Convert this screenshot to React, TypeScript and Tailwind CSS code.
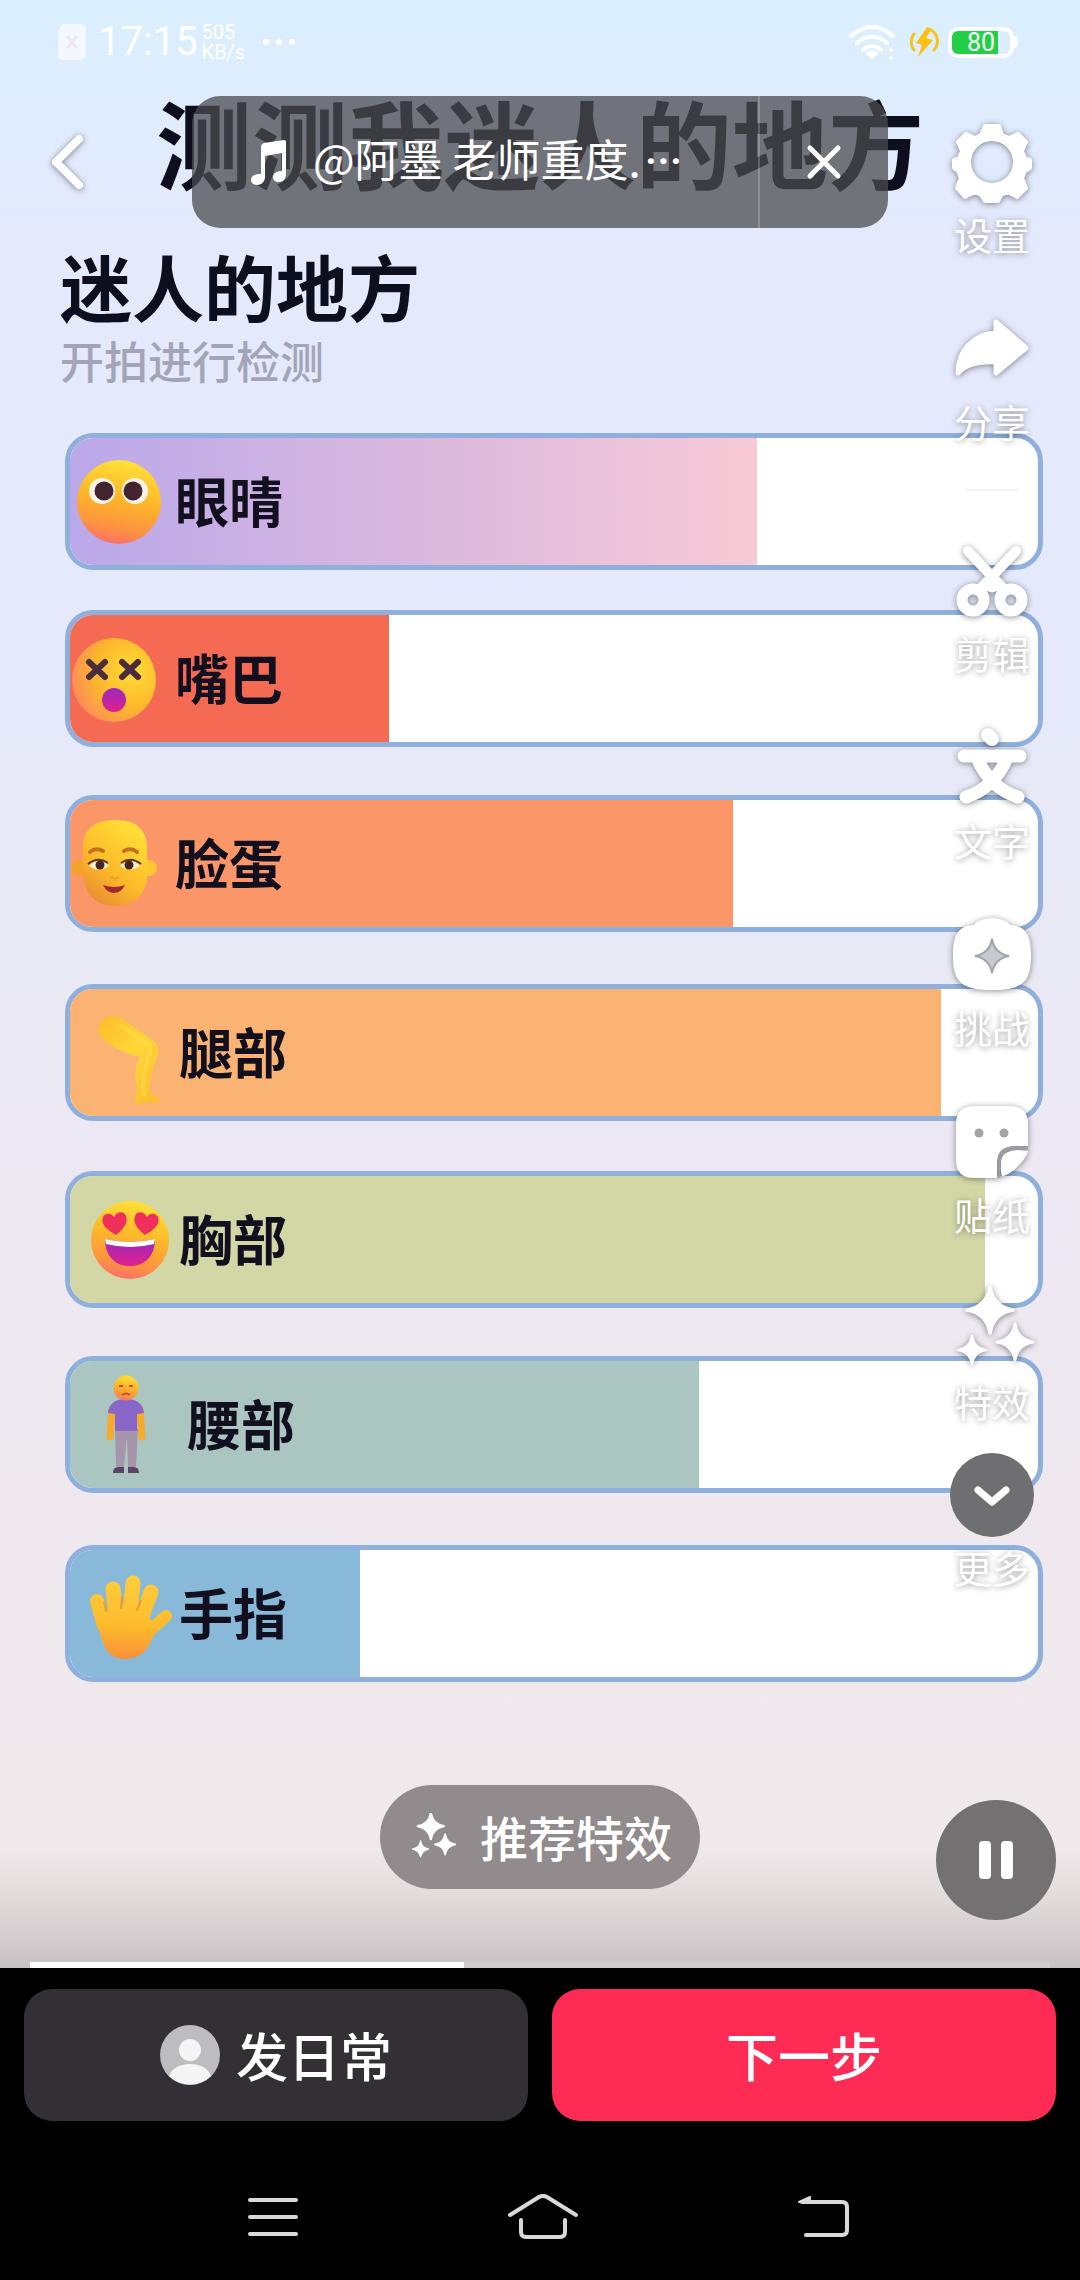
import type { ReactNode } from "react";

const FACE_STOPS = (
  <>
    <stop offset="0" stopColor="#ffe23a" />
    <stop offset="0.45" stopColor="#fdb827" />
    <stop offset="0.8" stopColor="#fd9440" />
    <stop offset="1" stopColor="#fb7168" />
  </>
);

function Defs() {
  return (
    <svg className="absolute size-0" aria-hidden="true">
      <defs>
        <linearGradient id="face" x1="0.65" y1="0" x2="0.45" y2="1">{FACE_STOPS}</linearGradient>
        <radialGradient id="dizzy" cx="0.72" cy="0.4" r="0.75">
          <stop offset="0" stopColor="#ffdc36" />
          <stop offset="0.6" stopColor="#fdb62c" />
          <stop offset="1" stopColor="#fb8a5c" />
        </radialGradient>
        <linearGradient id="mouth" x1="0" y1="0" x2="0" y2="1">
          <stop offset="0" stopColor="#9a2bc0" />
          <stop offset="1" stopColor="#e0208a" />
        </linearGradient>
        <linearGradient id="skin" x1="0.8" y1="0" x2="0.2" y2="1">
          <stop offset="0" stopColor="#ffe338" />
          <stop offset="0.6" stopColor="#fdb928" />
          <stop offset="1" stopColor="#e88a34" />
        </linearGradient>
        <linearGradient id="leg" x1="0" y1="0" x2="0.8" y2="1">
          <stop offset="0" stopColor="#fdbb28" />
          <stop offset="0.5" stopColor="#ffd638" />
          <stop offset="1" stopColor="#fcc030" />
        </linearGradient>
        <linearGradient id="hand" gradientUnits="userSpaceOnUse" x1="60" y1="10" x2="56" y2="96">
          <stop offset="0" stopColor="#ffcf3e" />
          <stop offset="0.6" stopColor="#fdbb2c" />
          <stop offset="1" stopColor="#f98f3a" />
        </linearGradient>
      </defs>
    </svg>
  );
}

function Emoji({ children }: { children: ReactNode }) {
  return (
    <svg viewBox="0 0 105 100" className="h-[100px] w-[105px] shrink-0 overflow-visible" aria-hidden="true">
      {children}
    </svg>
  );
}

const eyesEmoji = (
  <Emoji>
    <circle cx="49" cy="50" r="42" fill="url(#face)" />
    <circle cx="32" cy="39" r="13" fill="#fff3ea" />
    <circle cx="65" cy="39" r="13" fill="#fff3ea" />
    <circle cx="34" cy="39" r="9.5" fill="#422530" />
    <circle cx="63" cy="39" r="9.5" fill="#422530" />
  </Emoji>
);

const mouthEmoji = (
  <Emoji>
    <circle cx="44" cy="51" r="42" fill="url(#dizzy)" />
    <path d="M19 33l16 15M35 33L19 48M52 33l16 15M68 33L52 48" stroke="#4b2c3c" strokeWidth="6" strokeLinecap="round" />
    <circle cx="44" cy="71" r="12" fill="url(#mouth)" />
  </Emoji>
);

const faceEmoji = (
  <Emoji>
    <circle cx="10" cy="54" r="8" fill="#f3a428" />
    <circle cx="79" cy="54" r="8" fill="#fdc52f" />
    <path d="M13 34C13 14 26 6 45 6s32 8 32 28c0 12 1 22 0 32-3 17-16 26-32 26S17 83 14 66c-2-10-1-20-1-32z" fill="url(#skin)" />
    <path d="M20 38q6-5 13-1M54 37q7-4 13 1" stroke="#c5701f" strokeWidth="4" fill="none" strokeLinecap="round" />
    <path d="M19 52q10-10 20 0-10 7-20 0zM50 52q10-10 20 0-10 7-20 0z" fill="#fff1dc" />
    <circle cx="30" cy="51" r="4.5" fill="#4a2418" />
    <circle cx="59" cy="51" r="4.5" fill="#4a2418" />
    <path d="M18 50q10-8 20-1M51 49q10-7 20 1" stroke="#4f3a20" strokeWidth="2" fill="none" />
    <path d="M41 63q4 3 8 0" stroke="#ee9b26" strokeWidth="2" fill="none" />
    <path d="M33 71q11 4 22 0-4 8-11 8t-11-8z" fill="#a02a2c" />
  </Emoji>
);

const legEmoji = (
  <Emoji>
    <path
      d="M29 24C30 14 42 11 52 16L81 36C89 42 90 48 87 54C83 66 79 78 80 89L89 96C91 99 87 101 81 99L66 101C63 96 68 92 67 84C64 74 65 64 70 54C58 51 40 44 32 35C28 31 28 28 29 24Z"
      fill="url(#leg)"
    />
    <path d="M50 22L79 42C82 46 80 50 78 55C74 68 72 80 74 92" stroke="#ffe04a" strokeWidth="4" fill="none" strokeLinecap="round" opacity="0.5" />
  </Emoji>
);

const HEART = "M0 11C-9 5-13 0-12-6C-11-12-3-13 0-7C3-13 11-12 12-6C13 0 9 5 0 11Z";

const heartEmoji = (
  <Emoji>
    <circle cx="60" cy="50" r="39" fill="url(#face)" />
    <path d={HEART} transform="translate(45 34) rotate(-6)" fill="#f0305c" />
    <path d={HEART} transform="translate(76 34) rotate(6)" fill="#f0305c" />
    <path d="M35 49Q60 55 85 49C85 66 75 76 60 76S35 66 35 49Z" fill="url(#mouth)" />
    <path d="M35 49Q60 55 85 49L84 54Q60 60 36 54Z" fill="#fff" />
  </Emoji>
);

const personEmoji = (
  <Emoji>
    <path d="M42 34L40 62M70 34L72 62" stroke="#f6ab2b" strokeWidth="7" strokeLinecap="round" />
    <path d="M45 54h23l-2 38h-8l-1-30-3 30h-8z" fill="#a596ab" />
    <path d="M38 38C39 28 46 24 56 24S73 28 74 38L67 39V56H45V39Z" fill="#8a66c9" />
    <circle cx="56" cy="13" r="12.5" fill="url(#face)" />
    <path d="M49 11h4M59 11h4M52 20q4-3 8 0" stroke="#b5562a" strokeWidth="2" fill="none" />
    <path d="M43 98q0-7 7-6h4v6zM69 98q0-7-7-6h-4v6z" fill="#594466" />
  </Emoji>
);

const handEmoji = (
  <Emoji>
    <g stroke="url(#hand)" strokeLinecap="round" fill="none">
      <path d="M27 37L34 62" strokeWidth="14" />
      <path d="M43 25L47 58" strokeWidth="15" />
      <path d="M63 19L59 58" strokeWidth="15" />
      <path d="M81 28L70 58" strokeWidth="15" />
      <path d="M96 52L74 72" strokeWidth="12" />
    </g>
    <path d="M27 50C40 44 62 44 76 50L86 62C82 76 78 94 56 95C36 96 30 78 27 50Z" fill="url(#hand)" />
    <path d="M36 47l-2-9M51 44l1-11M67 46l4-9" stroke="#f39a25" strokeWidth="2" strokeLinecap="round" />
  </Emoji>
);

type Row = { label: string; icon: ReactNode; fill: string; percent: number; gap: string; inset: string };

const ROWS: Row[] = [
  { label: "眼晴", icon: eyesEmoji, fill: "bg-linear-to-r from-[#bba8ea] via-[#d9b8de] to-[#f8cad6]", percent: 71, gap: "", inset: "" },
  { label: "嘴巴", icon: mouthEmoji, fill: "bg-[#f46a53]", percent: 33, gap: "mt-10", inset: "" },
  { label: "脸蛋", icon: faceEmoji, fill: "bg-[#fb9668]", percent: 68.5, gap: "mt-12", inset: "" },
  { label: "腿部", icon: legEmoji, fill: "bg-[#fbb374]", percent: 90, gap: "mt-[52px]", inset: "ml-1" },
  { label: "胸部", icon: heartEmoji, fill: "bg-[#d3d7a6]", percent: 94.5, gap: "mt-[50px]", inset: "ml-1" },
  { label: "腰部", icon: personEmoji, fill: "bg-[#abc6c1]", percent: 65, gap: "mt-12", inset: "ml-3" },
  { label: "手指", icon: handEmoji, fill: "bg-[#88b9d8]", percent: 30, gap: "mt-[52px]", inset: "ml-1" },
];

function ResultBar({ row }: { row: Row }) {
  return (
    <li className={`relative flex h-[137px] items-center overflow-hidden rounded-[28px] border-[5px] border-[#8fb0dc] bg-white ${row.gap}`}>
      <div className={`absolute inset-y-0 left-0 ${row.fill}`} style={{ width: `${row.percent}%` }} />
      <div className="relative flex items-center">
        {row.icon}
        <span className={`pb-1 text-[54px] leading-[60px] font-bold text-[#12101f] ${row.inset}`}>{row.label}</span>
      </div>
    </li>
  );
}

const STAR = "M0-1C.1-.42.42-.1 1 0C.42.1.1.42 0 1C-.1.42-.42.1-1 0C-.42-.1-.1-.42 0-1Z";

function Sparkles({ className }: { className: string }) {
  return (
    <svg viewBox="0 0 84 84" className={className} fill="currentColor" stroke="currentColor" strokeWidth="0.16" strokeLinejoin="round" aria-hidden="true">
      <path d={STAR} transform="translate(40 23) scale(23)" />
      <path d={STAR} transform="translate(22 63) scale(14)" />
      <path d={STAR} transform="translate(65 55) scale(18)" />
    </svg>
  );
}

const ICON = "size-[84px] overflow-visible drop-shadow-[0_1px_3px_rgba(0,0,0,0.45)]";

const gearIcon = (
  <svg viewBox="0 0 84 84" className={ICON} aria-hidden="true">
    <path
      fill="#fff"
      fillRule="evenodd"
      stroke="#fff"
      strokeWidth="4"
      strokeLinejoin="round"
      d="M35 6h14l3 9 7 3 9-4 8 8-4 9 3 7 5 2v8l-5 3-3 7 4 10-9 9-9-5-7 3-3 6H35l-4-6-6-3-10 5-8-9 4-10-3-7-4-3v-8l5-2 3-7-4-9 8-8 9 4 6-3zM42 19a23 23 0 1 0 0 46 23 23 0 1 0 0-46z"
    />
  </svg>
);

const shareIcon = (
  <svg viewBox="0 0 84 84" className={ICON} fill="#fff" stroke="#fff" strokeWidth="5" strokeLinejoin="round" aria-hidden="true">
    <path d="M46 15L76 41L46 66V55C28 54 16 57 8 66C8 45 22 27 46 26Z" />
  </svg>
);

const scissorsIcon = (
  <svg viewBox="0 0 84 84" className={ICON} fill="none" stroke="#fff" aria-hidden="true">
    <path d="M18 12L52 48M66 12L32 48" strokeWidth="10" strokeLinecap="round" />
    <path d="M42 34L56 49L42 53L28 49Z" fill="#fff" />
    <circle cx="23" cy="61" r="11" strokeWidth="11" />
    <circle cx="61" cy="61" r="11" strokeWidth="11" />
  </svg>
);

const textIcon = (
  <svg viewBox="0 0 84 84" className={ICON} fill="none" stroke="#fff" strokeWidth="13" strokeLinecap="round" strokeLinejoin="round" aria-hidden="true">
    <path d="M38 9L42 13" strokeWidth="14" />
    <path d="M14 30H70M27 32Q40 62 68 71M57 32Q44 62 16 71" />
  </svg>
);

const challengeIcon = (
  <svg viewBox="0 0 84 84" className={ICON} aria-hidden="true">
    <path d="M24 12C29 3 55 3 60 12C76 13 81 22 81 42C81 68 74 77 42 77S3 68 3 42C3 22 8 13 24 12Z" fill="#fff" />
    <path d={STAR} transform="translate(42 43) scale(17)" fill="#c9cad2" stroke="#a5a6ad" strokeWidth="0.12" />
  </svg>
);

const stickerIcon = (
  <svg viewBox="0 0 84 84" className={ICON} aria-hidden="true">
    <path d="M24 6H60C72 6 78 12 78 24V46H66C52 46 47 52 47 64V78H24C12 78 6 72 6 60V24C6 12 12 6 24 6Z" fill="#fff" />
    <path d="M78 51C76 60 62 74 53 76C51 76 51 74 51 64C51 54 56 51 68 50Z" fill="#fff" />
    <path d="M78 48H67C53 48 49 53 49 65V78" fill="none" stroke="#9d9da3" strokeWidth="3" />
    <circle cx="29" cy="33" r="4.500" fill="#a3a3a8" />
    <circle cx="54" cy="33" r="4.500" fill="#a3a3a8" />
  </svg>
);

const moreIcon = (
  <span className="flex size-[84px] items-center justify-center rounded-full bg-[#6f6f72]">
    <svg viewBox="0 0 40 40" className="size-10" fill="none" stroke="#fff" strokeWidth="7" strokeLinecap="round" strokeLinejoin="round" aria-hidden="true">
      <path d="M6 15L20 27L34 15" />
    </svg>
  </span>
);

function Tool({ label, icon, gap = "" }: { label: string; icon: ReactNode; gap?: string }) {
  return (
    <button type="button" className={`flex flex-col items-center gap-3 text-white ${gap}`}>
      {icon}
      <span className="text-[38px] leading-9 [text-shadow:0_1px_6px_rgba(0,0,0,0.4)]">{label}</span>
    </button>
  );
}

function StatusBar() {
  return (
    <div className="flex h-[84px] items-center justify-between pr-[62px] pl-[58px] text-white">
      <div className="flex items-center">
        <svg viewBox="0 0 28 36" className="h-9 w-7" aria-hidden="true">
          <path d="M4 0H24a4 4 0 0 1 4 4V32a4 4 0 0 1-4 4H4a4 4 0 0 1-4-4V8z" fill="#fff" opacity="0.6" />
          <path d="M9 12l10 12M19 12L9 24" stroke="#f1e6f0" strokeWidth="3" />
        </svg>
        <span className="ml-3 font-[Roboto] text-[40px] leading-10">17:15</span>
        <span className="ml-1 flex flex-col font-[Roboto] text-[20px] leading-5">
          <span>505</span>
          <span>KB/s</span>
        </span>
        <svg viewBox="0 0 36 8" className="ml-4 h-2 w-9" fill="#fff" aria-hidden="true">
          <circle cx="5" cy="4" r="3" />
          <circle cx="18" cy="4" r="3" />
          <circle cx="31" cy="4" r="3" />
        </svg>
      </div>
      <div className="flex items-center gap-2">
        <svg viewBox="0 0 48 36" className="mr-1 h-9 w-12" fill="none" stroke="#fff" strokeWidth="4" strokeLinecap="round" aria-hidden="true">
          <path d="M3 12Q24-6 45 12M9 19Q24 6 39 19M15 26Q24 18 33 26" />
          <path d="M19 29Q24 25 29 29L24 34Z" fill="#fff" strokeWidth="2" />
          <path d="M43 25v1M43 33v1" strokeWidth="3" />
        </svg>
        <svg viewBox="0 0 32 32" className="size-8" aria-hidden="true">
          <path d="M6 8A13 13 0 0 0 6 24M26 24A13 13 0 0 0 23 4" fill="none" stroke="#f6c21c" strokeWidth="3" strokeLinecap="round" />
          <path d="M19 1L8 17L14 19L10 31L25 14L18 12L24 3Z" fill="#fcbf12" />
        </svg>
        <div className="flex items-center">
          <div className="relative flex h-[31px] w-[66px] items-center rounded-[10px] border-4 border-white">
            <div className="h-full w-4/5 rounded-l-md bg-[#23cf45]" />
            <span className="absolute inset-0 text-center font-[Roboto] text-[25px] leading-[23px]">80</span>
          </div>
          <div className="h-3 w-1 rounded-r bg-white" />
        </div>
      </div>
    </div>
  );
}

export default function App() {
  return (
    <div className="flex min-h-screen flex-col bg-black font-['Noto_Sans_CJK_SC',sans-serif]">
      <Defs />
      <main className="relative flex flex-1 flex-col bg-[linear-gradient(180deg,#daeffe_0px,#dfecfd_120px,#e4e9fc_230px,#e5e9fc_600px,#e8e9f5_900px,#ede8f2_1250px,#efe8ee_1550px,#f0e9eb_1850px,#e0dadb_1900px,#c9c2c5_1968px)]">
        <StatusBar />
        <h1 className="text-center text-[96px] leading-[114px] font-bold text-[#0d0f1e]">测测我迷人的地方</h1>
        <h2 className="mt-10 pl-[60px] text-[72px] leading-[94px] font-bold text-[#0d0f1e]">迷人的地方</h2>
        <p className="pl-[60px] text-[44px] leading-[56px] font-medium text-[#a3a5b7]">开拍进行检测</p>

        <ul className="mt-[45px] pr-[37px] pl-[65px]">
          {ROWS.map((row) => (
            <ResultBar key={row.label} row={row} />
          ))}
        </ul>

        <div className="mt-[103px] flex justify-center">
          <button type="button" className="flex h-[104px] items-center gap-6 rounded-full bg-[#918b8d] px-7 text-white">
            <Sparkles className="size-12" />
            <span className="pb-0.5 text-[48px] leading-[60px] font-medium">推荐特效</span>
          </button>
        </div>

        <div className="mx-[30px] mt-auto h-1.5 bg-[#d0cbcc]">
          <div className="h-full w-[42.5%] bg-white" />
        </div>

        <header className="absolute inset-x-0 top-24 flex h-[132px] items-center">
          <button type="button" aria-label="返回" className="ml-[45px] h-16 w-11">
            <svg viewBox="0 0 44 64" className="h-16 w-11 overflow-visible drop-shadow-[0_1px_3px_rgba(0,0,0,0.45)]" fill="none" stroke="#fff" strokeWidth="8" strokeLinecap="round" strokeLinejoin="round" aria-hidden="true">
              <path d="M34 9L11 32L34 55" />
            </svg>
          </button>
          <div className="mr-48 ml-[103px] flex h-full min-w-0 flex-1 overflow-hidden rounded-[28px] bg-[#4b4b4f]/75 text-white">
            <button type="button" className="flex min-w-0 flex-1 items-center pl-[57px]">
              <svg viewBox="0 0 40 48" className="h-12 w-10 shrink-0" fill="#fff" aria-hidden="true">
                <path d="M12 9C12 7 13 6 15 5L35 2Q37 2 37 4V36C37 41 34 44 30 44C26 44 24 42 24 39C24 36 27 33 33 33V15L16 18V39C16 44 12 47 8 47C5 47 2 45 2 42C2 38 6 36 12 36Z" />
              </svg>
              <span className="ml-6 pb-1 text-[44px] leading-[60px] whitespace-nowrap">
                @阿墨 老师重度.<span className="pl-1 font-[Roboto] font-medium">···</span>
              </span>
            </button>
            <button type="button" aria-label="关闭" className="flex w-[130px] shrink-0 items-center justify-center border-l-2 border-white/20">
              <svg viewBox="0 0 36 36" className="size-9" fill="none" stroke="#fff" strokeWidth="5" strokeLinecap="round" aria-hidden="true">
                <path d="M4 4L32 32M32 4L4 32" />
              </svg>
            </button>
          </div>
        </header>

        <nav aria-label="编辑工具" className="absolute top-[120px] right-[46px] flex flex-col items-center">
          <Tool label="设置" icon={gearIcon} />
          <Tool label="分享" icon={shareIcon} gap="mt-[55px]" />
          <div className="mt-[50px] h-0.5 w-[54px] bg-[#f3f1f2]" />
          <Tool label="剪辑" icon={scissorsIcon} gap="mt-12" />
          <Tool label="文字" icon={textIcon} gap="mt-[55px]" />
          <Tool label="挑战" icon={challengeIcon} gap="mt-[55px]" />
          <Tool label="贴纸" icon={stickerIcon} gap="mt-[55px]" />
          <Tool label="特效" icon={<Sparkles className={ICON} />} gap="mt-[55px]" />
          <Tool label="更多" icon={moreIcon} gap="mt-[34px]" />
        </nav>

        <button type="button" aria-label="暂停" className="absolute right-6 bottom-12 flex size-[120px] items-center justify-center gap-2.5 rounded-full bg-[#737172]">
          <span className="h-[38px] w-3 rounded-sm bg-white" />
          <span className="h-[38px] w-3 rounded-sm bg-white" />
        </button>
      </main>

      <footer>
        <div className="grid grid-cols-2 gap-6 px-6 pt-[21px] text-[52px] font-medium text-white">
          <button type="button" className="flex h-[132px] items-center justify-center gap-4 rounded-[28px] bg-[#323034]">
            <svg viewBox="0 0 60 60" className="size-[60px]" aria-hidden="true">
              <circle cx="30" cy="30" r="30" fill="#bdbdbf" />
              <circle cx="30" cy="25" r="11" fill="#f5f5f6" />
              <path d="M9 51C12 43 20 39 30 39S48 43 51 51A30 30 0 0 1 9 51Z" fill="#f5f5f6" />
            </svg>
            发日常
          </button>
          <button type="button" className="flex h-[132px] items-center justify-center rounded-[28px] bg-[#fe2c55]">下一步</button>
        </div>
        <div className="mt-[60px] flex items-center justify-center pb-[27px] pl-4">
          <button type="button" aria-label="最近任务" className="flex size-[72px] items-center justify-center">
            <svg viewBox="0 0 54 44" className="h-11 w-[54px]" stroke="#d9d9d9" strokeWidth="4" strokeLinecap="round" aria-hidden="true">
              <path d="M4 5H50M4 22H50M4 39H50" />
            </svg>
          </button>
          <button type="button" aria-label="主屏幕" className="mr-52 ml-[198px] flex size-[72px] items-center justify-center">
            <svg viewBox="0 0 72 46" className="h-[46px] w-[72px]" fill="none" stroke="#d9d9d9" strokeWidth="4" strokeLinecap="round" strokeLinejoin="round" aria-hidden="true">
              <path d="M3 21L32 3Q36 1 40 3L69 21M14 26V38Q14 43 19 43H53Q58 43 58 38V26" />
            </svg>
          </button>
          <button type="button" aria-label="返回上一级" className="flex size-[72px] items-center justify-center">
            <svg viewBox="0 0 54 44" className="h-11 w-[54px]" fill="none" stroke="#d9d9d9" strokeWidth="4" strokeLinecap="round" strokeLinejoin="round" aria-hidden="true">
              <path d="M6 7H46Q51 7 51 12V35Q51 40 46 40H10" />
              <path d="M14 2V7H3Z" fill="#d9d9d9" strokeWidth="2" />
            </svg>
          </button>
        </div>
      </footer>
    </div>
  );
}
